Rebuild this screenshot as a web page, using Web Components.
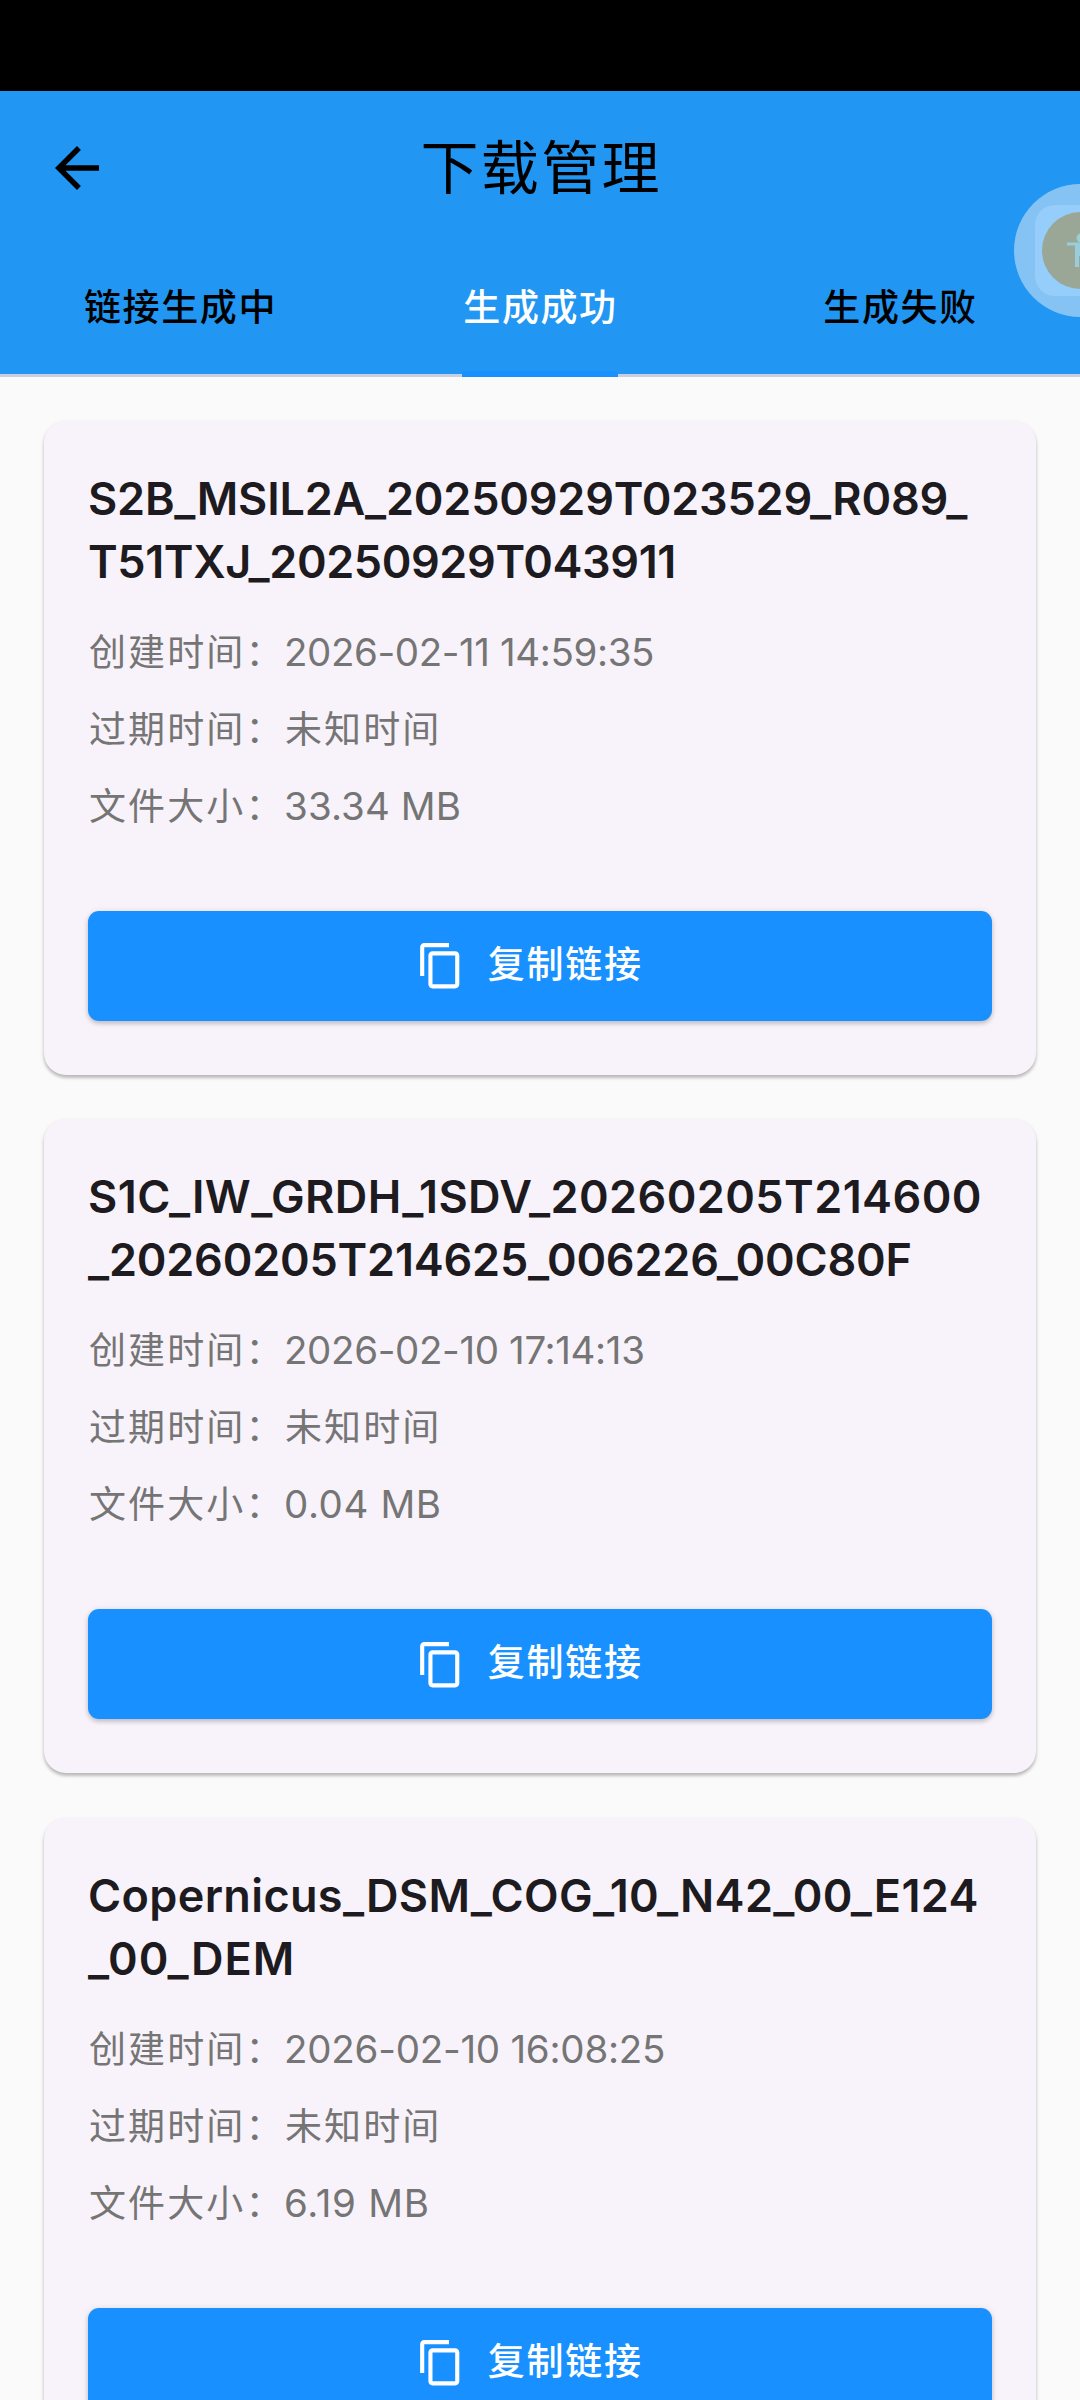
<!DOCTYPE html>
<html lang="zh-CN">
<head>
<meta charset="utf-8">
<title>下载管理</title>
<style>
    body {
        margin: 0;
        width: 1080px;
        height: 2400px;
        overflow: hidden;
        background: #fafafa;
        font-family: Inter, "Noto Sans CJK SC", sans-serif;
    }
</style>
</head>
<body>
<download-page>
    <app-header slot="header" page-title="下载管理">
        <tab-item>链接生成中</tab-item>
        <tab-item active>生成成功</tab-item>
        <tab-item>生成失败</tab-item>
    </app-header>

    <download-card>
        <title-line slot="name" spacing="-0.2px">S2B_MSIL2A_20250929T023529_R089_</title-line>
        <title-line slot="name" spacing="-0.4px">T51TXJ_20250929T043911</title-line>
        <detail-row label="创建时间：" spacing="-0.4px">2026-02-11 14:59:35</detail-row>
        <detail-row label="过期时间：">未知时间</detail-row>
        <detail-row label="文件大小：" spacing="0.1px">33.34 MB</detail-row>
    </download-card>

    <download-card>
        <title-line slot="name" spacing="0.42px">S1C_IW_GRDH_1SDV_20260205T214600</title-line>
        <title-line slot="name" spacing="-0.2px">_20260205T214625_006226_00C80F</title-line>
        <detail-row label="创建时间：" spacing="-0.36px">2026-02-10 17:14:13</detail-row>
        <detail-row label="过期时间：">未知时间</detail-row>
        <detail-row label="文件大小：" spacing="0.6px">0.04 MB</detail-row>
    </download-card>

    <download-card>
        <title-line slot="name" spacing="0.36px">Copernicus_DSM_COG_10_N42_00_E124</title-line>
        <title-line slot="name" spacing="1px">_00_DEM</title-line>
        <detail-row label="创建时间：" spacing="-0.24px">2026-02-10 16:08:25</detail-row>
        <detail-row label="过期时间：">未知时间</detail-row>
        <detail-row label="文件大小：" spacing="0.7px">6.19 MB</detail-row>
    </download-card>

    <assist-bubble slot="overlay"></assist-bubble>
</download-page>

<script>
class DownloadPage extends HTMLElement {
    constructor() {
        super();
        this.attachShadow({ mode: "open" });
        this.shadowRoot.innerHTML = `
            <style>
                :host {
                    display: flex;
                    flex-direction: column;
                    position: relative;
                    height: 2400px;
                    overflow: hidden;
                }

                .status-bar {
                    flex: none;
                    height: 91px;
                    background: #000;
                }

                .list {
                    display: flex;
                    flex-direction: column;
                    gap: 44.4px;
                    padding: 44px 44px 0;
                }
            </style>
            <div class="status-bar"></div>
            <slot name="header"></slot>
            <div class="list"><slot></slot></div>
            <slot name="overlay"></slot>
        `;
    }
}

class AppHeader extends HTMLElement {
    constructor() {
        super();
        this.attachShadow({ mode: "open" });
        const title = this.getAttribute("page-title") || "";
        this.shadowRoot.innerHTML = `
            <style>
                :host {
                    display: block;
                    flex: none;
                    height: 286px;
                    background: #2196f3;
                    color: #000;
                }

                .bar {
                    display: grid;
                    grid-template-columns: 154px 1fr 154px;
                    align-items: center;
                    height: 154px;
                }

                .bar svg {
                    width: 66px;
                    height: 66px;
                    margin-left: 44px;
                    display: block;
                }

                h1 {
                    margin: 0;
                    text-align: center;
                    font-size: 58px;
                    line-height: 80px;
                    font-weight: 400;
                    letter-spacing: 2.4px;
                    text-indent: 2.4px;
                }

                .tabs {
                    display: grid;
                    grid-template-columns: repeat(3, 1fr);
                    height: 132px;
                    box-sizing: border-box;
                    background: linear-gradient(#c8cfe2, #c8cfe2) bottom / 100% 3px no-repeat;
                }
            </style>
            <div class="bar">
                <svg viewBox="0 0 24 24"><path d="M20 11H7.83l5.59-5.59L12 4l-8 8 8 8 1.41-1.41L7.83 13H20v-2z"/></svg>
                <h1>${title}</h1>
            </div>
            <div class="tabs"><slot></slot></div>
        `;
    }
}

class TabItem extends HTMLElement {
    constructor() {
        super();
        this.attachShadow({ mode: "open" });
        this.shadowRoot.innerHTML = `
            <style>
                :host {
                    display: flex;
                    justify-content: center;
                    font-size: 37px;
                    line-height: 125px;
                    font-weight: 500;
                    letter-spacing: 1.6px;
                }

                :host([active]) {
                    color: #fff;
                }

                span {
                    height: 132px;
                    box-sizing: border-box;
                    text-indent: 1px;
                }

                :host([active]) span {
                    border-bottom: 6px solid #1890ff;
                }
            </style>
            <span><slot></slot></span>
        `;
    }
}

class DownloadCard extends HTMLElement {
    constructor() {
        super();
        this.attachShadow({ mode: "open" });
        this.shadowRoot.innerHTML = `
            <style>
                :host {
                    display: flex;
                    flex-direction: column;
                    flex: none;
                    box-sizing: border-box;
                    height: 654px;
                    padding: 46px 44px 0;
                    border-radius: 22px;
                    background: #f8f3fa;
                    box-shadow: 0 3px 3px rgba(0, 0, 0, 0.16), 0 2px 4px rgba(0, 0, 0, 0.14);
                }

                .name {
                    height: 126px;
                    margin-bottom: 21px;
                }

                .details {
                    display: flex;
                    flex-direction: column;
                    margin-bottom: 66px;
                }
            </style>
            <div class="name"><slot name="name"></slot></div>
            <div class="details"><slot></slot></div>
            <copy-button>复制链接</copy-button>
        `;
    }
}

class TitleLine extends HTMLElement {
    constructor() {
        super();
        this.attachShadow({ mode: "open" });
        const spacing = this.getAttribute("spacing") || "0";
        this.shadowRoot.innerHTML = `
            <style>
                :host {
                    display: block;
                    color: #1d1b20;
                    font-size: 45px;
                    line-height: 63px;
                    font-weight: 600;
                    letter-spacing: ${spacing};
                    white-space: nowrap;
                }
            </style>
            <slot></slot>
        `;
    }
}

class DetailRow extends HTMLElement {
    constructor() {
        super();
        this.attachShadow({ mode: "open" });
        const label = this.getAttribute("label") || "";
        const spacing = this.getAttribute("spacing");
        // plain CJK values share the label metrics
        const value = spacing ? `font-size: 38.5px; letter-spacing: ${spacing};` : "text-indent: 1px;";
        this.shadowRoot.innerHTML = `
            <style>
                :host {
                    display: flex;
                    align-items: baseline;
                    color: #757575;
                    font-size: 37px;
                    line-height: 77px;
                    height: 77px;
                    letter-spacing: 2.1px;
                    white-space: nowrap;
                }

                .label {
                    width: 196px;
                    text-indent: 1px;
                }

                .value {
                    ${value}
                }
            </style>
            <span class="label">${label}</span>
            <span class="value"><slot></slot></span>
        `;
    }
}

class CopyButton extends HTMLElement {
    constructor() {
        super();
        this.attachShadow({ mode: "open" });
        this.shadowRoot.innerHTML = `
            <style>
                :host {
                    display: block;
                }

                button {
                    display: flex;
                    align-items: center;
                    justify-content: center;
                    gap: 21px;
                    width: 100%;
                    height: 110px;
                    padding: 0 65px 0 44px;
                    border: 0;
                    border-radius: 11px;
                    background: #1890ff;
                    color: #fff;
                    font: inherit;
                    font-size: 37px;
                    line-height: 56px;
                    font-weight: 500;
                    letter-spacing: 1.8px;
                    box-shadow: 0 3px 4px rgba(0, 0, 0, 0.14), 0 1px 6px rgba(0, 0, 0, 0.12);
                }

                svg {
                    width: 49.5px;
                    height: 49.5px;
                    fill: #fff;
                }

                span {
                    height: 56px;
                    padding-bottom: 2px;
                    text-indent: 1px;
                }
            </style>
            <button>
                <svg viewBox="0 0 24 24"><path d="M16 1H4c-1.100 0-2 .9-2 2v14h2V3h12V1zm3 4H8c-1.100 0-2 .9-2 2v14c0 1.100.9 2 2 2h11c1.100 0 2-.9 2-2V7c0-1.100-.9-2-2-2zm0 16H8V7h11v14z"/></svg>
                <span><slot></slot></span>
            </button>
        `;
    }
}

// floating accessibility bubble, half off the right edge
class AssistBubble extends HTMLElement {
    constructor() {
        super();
        this.attachShadow({ mode: "open" });
        this.shadowRoot.innerHTML = `
            <style>
                :host {
                    position: absolute;
                    top: 184px;
                    right: 0;
                    width: 66px;
                    height: 133px;
                    overflow: hidden;
                }

                svg {
                    display: block;
                    width: 133px;
                    height: 133px;
                }
            </style>
            <svg viewBox="0 0 133 133">
                <circle cx="66.500" cy="66.500" r="66.500" fill="#86c3f5"/>
                <rect x="21" y="21" width="91" height="91" rx="20" fill="#95cdfb"/>
                <circle cx="66.500" cy="66.500" r="38.500" fill="#9ba796"/>
                <circle cx="67" cy="54" r="4.500" fill="#9bcfd0"/>
                <path d="M53 58.500h28v3H73v22h-3V72h-5v11h-4V61.500h-8z" fill="#98cddb"/>
            </svg>
        `;
    }
}

customElements.define("download-page", DownloadPage);
customElements.define("app-header", AppHeader);
customElements.define("tab-item", TabItem);
customElements.define("download-card", DownloadCard);
customElements.define("title-line", TitleLine);
customElements.define("detail-row", DetailRow);
customElements.define("copy-button", CopyButton);
customElements.define("assist-bubble", AssistBubble);
</script>
</body>
</html>
